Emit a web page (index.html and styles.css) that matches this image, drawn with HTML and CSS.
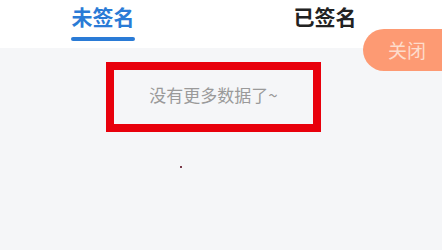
FILE: index.html
```html
<!DOCTYPE html>
<html lang="zh-CN">
<head>
<meta charset="utf-8">
<link rel="stylesheet" href="styles.css">
</head>
<body>
<div class="page">
  <div class="tabs">
    <div class="tab active">未签名<span class="bar"></span></div>
    <div class="tab">已签名</div>
  </div>
  <div class="content">
    <div class="empty">没有更多数据了~</div>
    <span class="dot"></span>
  </div>
  <div class="close">关闭</div>
</div>
</body>
</html>
```
FILE: styles.css
```css
html, body {
  margin: 0;
  padding: 0;
}
body {
  font-family: "Noto Sans CJK SC", "Noto Sans", sans-serif;
  width: 442px;
  height: 250px;
  overflow: hidden;
  background: #f5f6f8;
}
.page {
  position: relative;
  width: 442px;
  height: 250px;
}
.tabs {
  height: 48px;
  background: #ffffff;
  display: flex;
  padding-left: 71px;
  gap: 158px;
  box-sizing: border-box;
}
.tab {
  position: relative;
  font-size: 21px;
  font-weight: 700;
  color: #222222;
  line-height: 30px;
  padding-top: 1px;
  width: 64px;
  text-align: center;
  white-space: nowrap;
}
.tab.active {
  color: #2a7bd6;
}
.bar {
  position: absolute;
  left: 0;
  top: 37px;
  width: 64px;
  height: 4px;
  border-radius: 2px;
  background: #2a7bd6;
}
.content {
  position: relative;
  padding-top: 14px;
  padding-left: 106px;
}
.empty {
  width: 215px;
  height: 70px;
  box-sizing: border-box;
  border: 8px solid #e8000c;
  display: flex;
  align-items: center;
  justify-content: center;
  font-size: 17px;
  color: #9a9a9a;
  padding-bottom: 5px;
}
.dot {
  position: absolute;
  left: 180px;
  top: 118px;
  width: 2px;
  height: 2px;
  background: #7a3a4a;
}
.close {
  position: absolute;
  left: 363px;
  top: 29px;
  width: 100px;
  height: 42px;
  border-radius: 21px;
  background: #fd9a73;
  color: #fddccb;
  font-size: 19px;
  line-height: 42px;
  padding-left: 25px;
  box-sizing: border-box;
}
```
